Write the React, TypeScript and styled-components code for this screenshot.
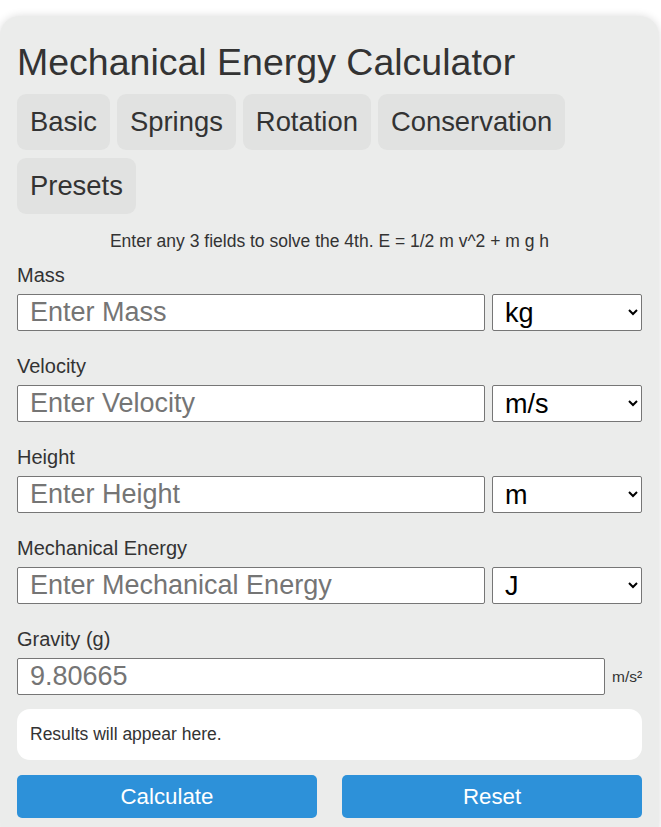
import { createGlobalStyle } from "styled-components";
import styled from "styled-components";

const GlobalStyle = createGlobalStyle`
  body {
    margin: 0;
    background: #ffffff;
    font-family: "Liberation Sans", Arial, sans-serif;
    color: #333333;
  }
`;

const Page = styled.div`
  padding-top: 16px;
`;

const Card = styled.div`
  width: 659px;
  box-sizing: border-box;
  background: #ebeceb;
  border-radius: 20px;
  box-shadow: 0 0 8px rgba(0, 0, 0, 0.14);
  padding: 25px 17px 24px;
`;

const Title = styled.h1`
  margin: 0 0 10px;
  font-size: 37.5px;
  font-weight: normal;
  color: #333;
`;

const Tabs = styled.div`
  display: flex;
  flex-wrap: wrap;
  gap: 8px 7px;
`;

const Tab = styled.button`
  font-family: inherit;
  font-size: 27.4px;
  color: #333;
  background: #e1e2e1;
  border: none;
  border-radius: 9px;
  padding: 12px 13px;
  line-height: 32px;
  cursor: pointer;
`;

const Hint = styled.p`
  margin: 17px 0 13px;
  text-align: center;
  font-size: 17.5px;
  line-height: 20px;
`;

const Field = styled.div`
  margin-bottom: 24px;
`;

const Label = styled.label`
  display: block;
  font-size: 20px;
  line-height: 23px;
  margin-bottom: 7px;
`;

const Row = styled.div<{ $unitWidth: number }>`
  display: grid;
  grid-template-columns: 1fr ${(p) => p.$unitWidth}px;
  gap: 7px;
  align-items: center;
`;

const Input = styled.input`
  box-sizing: border-box;
  width: 100%;
  height: 37px;
  font-family: inherit;
  font-size: 27px;
  padding: 2px 12px;
  border: 1px solid #767676;
  border-radius: 2px;
  background: #fff;
  color: #333;
  &::placeholder {
    color: #757575;
  }
`;

const Select = styled.select`
  box-sizing: border-box;
  width: 100%;
  height: 37px;
  font-family: inherit;
  font-size: 27px;
  padding: 0 6px 0 8px;
  border: 1px solid #767676;
  border-radius: 2px;
  background: #fff;
  color: #000;
`;

const Unit = styled.span`
  font-size: 15.5px;
  color: #333;
`;

const Results = styled.div`
  background: #fff;
  border-radius: 13px;
  padding: 15px 13px 16px;
  font-size: 17.5px;
  line-height: 20px;
  margin-top: -10px;
`;

const Actions = styled.div`
  display: grid;
  grid-template-columns: 1fr 1fr;
  gap: 25px;
  margin-top: 15px;
`;

const ActionButton = styled.button`
  height: 43px;
  border: none;
  border-radius: 5px;
  background: #2d91d9;
  color: #fff;
  font-family: inherit;
  font-size: 22.3px;
  cursor: pointer;
`;

const fields = [
  { label: "Mass", placeholder: "Enter Mass", units: ["kg", "g", "lb"] },
  { label: "Velocity", placeholder: "Enter Velocity", units: ["m/s", "km/h", "mph"] },
  { label: "Height", placeholder: "Enter Height", units: ["m", "cm", "ft"] },
  { label: "Mechanical Energy", placeholder: "Enter Mechanical Energy", units: ["J", "kJ", "cal"] },
];

export default function App() {
  return (
    <Page>
      <GlobalStyle />
      <Card>
        <Title>Mechanical Energy Calculator</Title>
        <Tabs>
          <Tab>Basic</Tab>
          <Tab>Springs</Tab>
          <Tab>Rotation</Tab>
          <Tab>Conservation</Tab>
          <Tab>Presets</Tab>
        </Tabs>
        <Hint>Enter any 3 fields to solve the 4th. E = 1/2 m v^2 + m g h</Hint>
        {fields.map((f) => (
          <Field key={f.placeholder}>
            <Label>{f.label}</Label>
            <Row $unitWidth={150}>
              <Input placeholder={f.placeholder} />
              <Select defaultValue={f.units[0]}>
                {f.units.map((u) => (
                  <option key={u}>{u}</option>
                ))}
              </Select>
            </Row>
          </Field>
        ))}
        <Field>
          <Label>Gravity (g)</Label>
          <Row $unitWidth={30}>
            <Input placeholder="9.80665" />
            <Unit>m/s²</Unit>
          </Row>
        </Field>
        <Results>Results will appear here.</Results>
        <Actions>
          <ActionButton>Calculate</ActionButton>
          <ActionButton>Reset</ActionButton>
        </Actions>
      </Card>
    </Page>
  );
}
